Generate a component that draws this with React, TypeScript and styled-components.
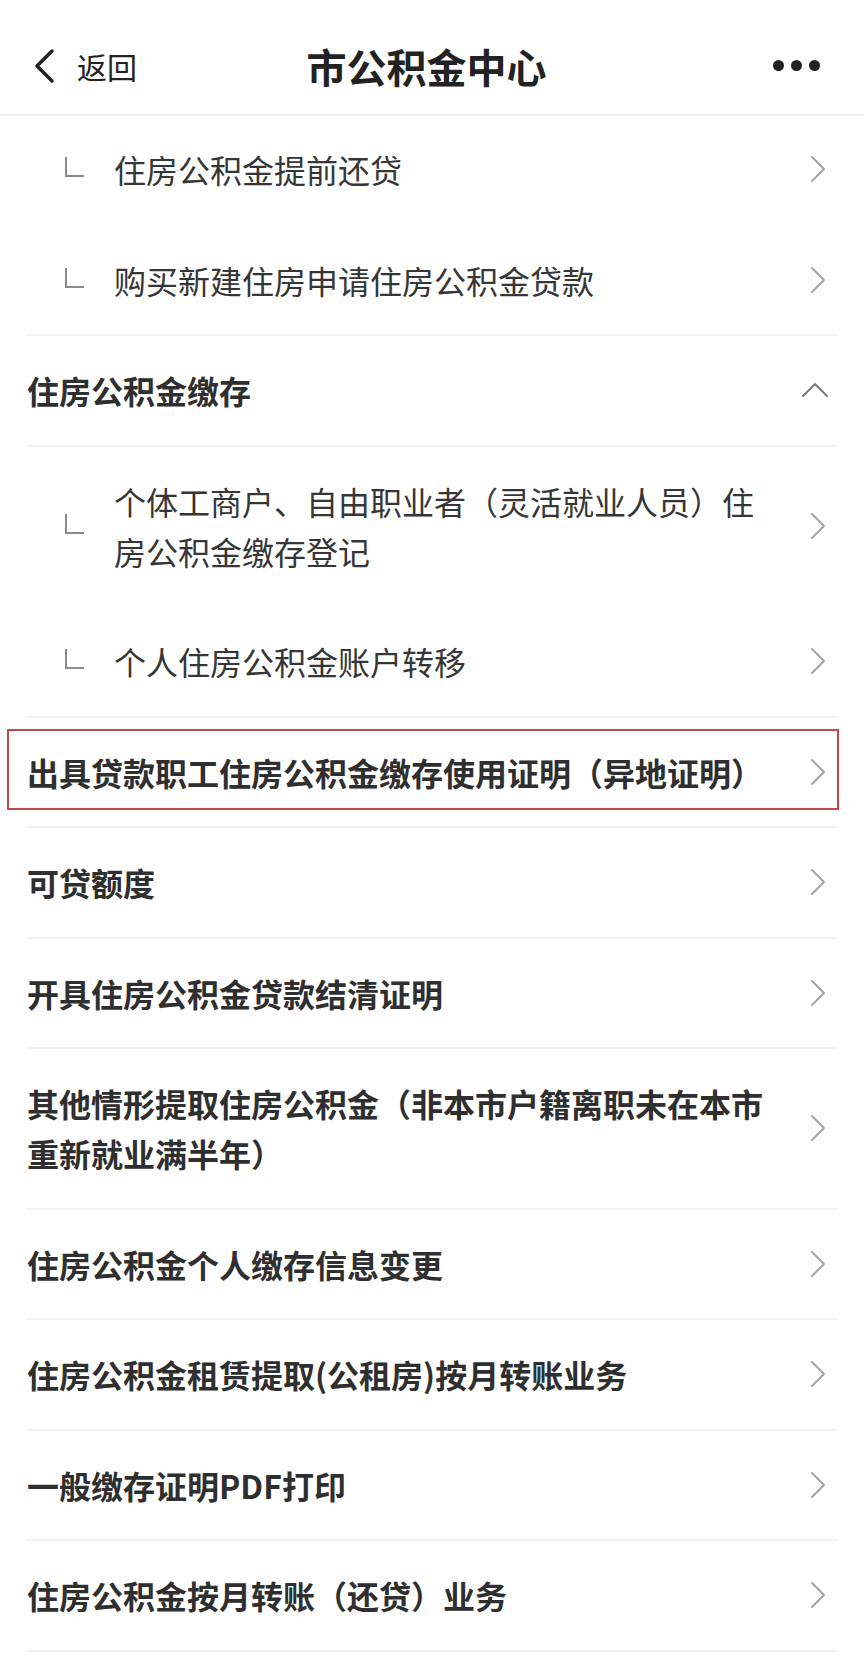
import React from "react";
import styled, { createGlobalStyle } from "styled-components";

const GlobalStyle = createGlobalStyle`
  html, body {
    margin: 0;
    padding: 0;
    background: #ffffff;
  }
  body {
    font-family: "Noto Sans CJK SC", "Noto Sans", sans-serif;
    color: #333333;
  }
`;

type Item = {
  text: string;
  kind: "sub" | "main" | "group";
  divider: boolean;
  highlight?: boolean;
};

const items: Item[] = [
  { text: "住房公积金提前还贷", kind: "sub", divider: false },
  { text: "购买新建住房申请住房公积金贷款", kind: "sub", divider: true },
  { text: "住房公积金缴存", kind: "group", divider: true },
  {
    text: "个体工商户、自由职业者（灵活就业人员）住房公积金缴存登记",
    kind: "sub",
    divider: false,
  },
  { text: "个人住房公积金账户转移", kind: "sub", divider: true },
  {
    text: "出具贷款职工住房公积金缴存使用证明（异地证明）",
    kind: "main",
    divider: true,
    highlight: true,
  },
  { text: "可贷额度", kind: "main", divider: true },
  { text: "开具住房公积金贷款结清证明", kind: "main", divider: true },
  {
    text: "其他情形提取住房公积金（非本市户籍离职未在本市重新就业满半年）",
    kind: "main",
    divider: true,
  },
  { text: "住房公积金个人缴存信息变更", kind: "main", divider: true },
  { text: "住房公积金租赁提取(公租房)按月转账业务", kind: "main", divider: true },
  { text: "一般缴存证明PDF打印", kind: "main", divider: true },
  { text: "住房公积金按月转账（还贷）业务", kind: "main", divider: true },
];

const Page = styled.div`
  width: 864px;
  min-height: 1660px;
  background: #ffffff;
`;

const Header = styled.header`
  box-sizing: border-box;
  height: 115px;
  padding: 17px 44px 0 33px;
  display: grid;
  grid-template-columns: 1fr auto 1fr;
  align-items: center;
  border-bottom: 1px solid #ebebeb;
  box-shadow: 0 1px 1px rgba(0, 0, 0, 0.03);
`;

const Back = styled.div`
  display: flex;
  align-items: center;
  gap: 22px;
  color: #222222;
  font-size: 30px;
  line-height: 1;
`;

const Title = styled.h1`
  margin: 0;
  font-size: 40px;
  font-weight: 700;
  color: #222222;
  line-height: 1;
`;

const More = styled.div`
  justify-self: end;
  display: flex;
  gap: 7px;
`;

const Dot = styled.span`
  width: 11px;
  height: 11px;
  border-radius: 50%;
  background: #222222;
`;

const List = styled.main`
  padding: 0 27px;
`;

const Row = styled.div<{ $divider: boolean }>`
  position: relative;
  box-sizing: border-box;
  display: flex;
  align-items: center;
  padding: 29.25px 0;
  border-bottom: 2px solid ${(p) => (p.$divider ? "#f0f0f0" : "transparent")};
`;

const Mark = styled.span`
  flex: none;
  box-sizing: border-box;
  width: 19px;
  height: 20px;
  margin: -4px 30px 0 38px;
  border-left: 2.5px solid #8a8a8a;
  border-bottom: 2.5px solid #8a8a8a;
`;

const Label = styled.span<{ $bold: boolean }>`
  flex: 1;
  min-width: 0;
  margin-right: 30px;
  font-size: 32px;
  line-height: 50px;
  font-weight: ${(p) => (p.$bold ? 700 : 400)};
  color: ${(p) => (p.$bold ? "#2f2f2f" : "#363636")};
`;

const Arrow = styled.svg<{ $gap: number }>`
  flex: none;
  margin-right: ${(p) => p.$gap}px;
`;

const Highlight = styled.span`
  position: absolute;
  top: 11px;
  bottom: 16px;
  left: -20px;
  right: -2px;
  border: 2px solid #c4474a;
  pointer-events: none;
`;

const ChevronRight = () => (
  <Arrow $gap={11} width="16" height="28" viewBox="0 0 16 28">
    <polyline
      points="2,2 14,14 2,26"
      fill="none"
      stroke="#a3a3a3"
      strokeWidth="2"
      strokeLinecap="round"
      strokeLinejoin="round"
    />
  </Arrow>
);

const ChevronUp = () => (
  <Arrow $gap={8} width="28" height="16" viewBox="0 0 28 16">
    <polyline
      points="2,14 14,2 26,14"
      fill="none"
      stroke="#7a7a7a"
      strokeWidth="2"
      strokeLinecap="round"
      strokeLinejoin="round"
    />
  </Arrow>
);

const MenuRow = ({ item }: { item: Item }) => (
  <Row $divider={item.divider}>
    {item.kind === "sub" && <Mark />}
    <Label $bold={item.kind !== "sub"}>{item.text}</Label>
    {item.kind === "group" ? <ChevronUp /> : <ChevronRight />}
    {item.highlight && <Highlight />}
  </Row>
);

export default function App() {
  return (
    <Page>
      <GlobalStyle />
      <Header>
        <Back>
          <svg width="22" height="36" viewBox="0 0 22 36">
            <polyline
              points="19,3 4,18 19,33"
              fill="none"
              stroke="#222222"
              strokeWidth="3.5"
              strokeLinecap="round"
              strokeLinejoin="round"
            />
          </svg>
          <span>返回</span>
        </Back>
        <Title>市公积金中心</Title>
        <More>
          <Dot />
          <Dot />
          <Dot />
        </More>
      </Header>
      <List>
        {items.map((item) => (
          <MenuRow key={item.text} item={item} />
        ))}
      </List>
    </Page>
  );
}
